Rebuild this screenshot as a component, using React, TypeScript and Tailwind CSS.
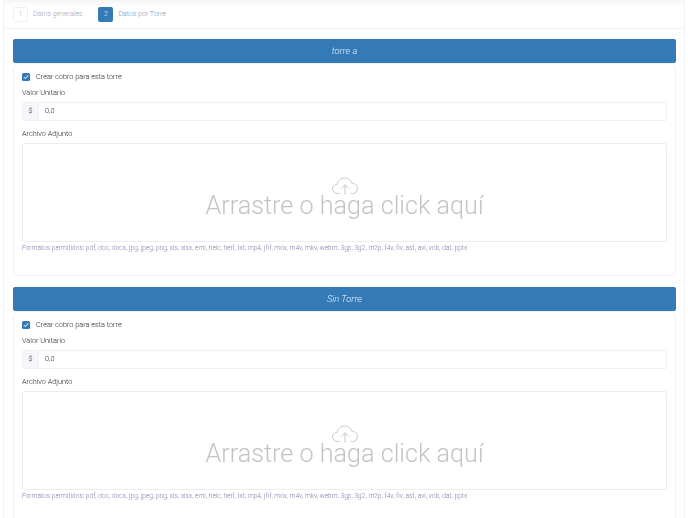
const Cloud = () => (
  <svg width="27" height="18" viewBox="0 0 27 18" fill="none" stroke="#c9c9c9" strokeWidth="1" className="absolute left-1/2 top-[33px] -translate-x-1/2">
    <path d="M8 16.5H6.5C3.2 16.5 1 14.4 1 11.7C1 9.2 3 7.3 5.6 7.2C6.4 3.6 9.5 1 13.2 1C16.8 1 19.6 3.2 20.6 6.4C23.6 6.5 26 8.6 26 11.5C26 14.4 23.8 16.5 20.8 16.5H19" />
    <path d="M13.5 17.5V8M9.8 11.5L13.5 7.8L17.2 11.5" />
  </svg>
);

const Section = ({ title }: { title: string }) => (
  <section className="mb-[11px]">
    <div className="h-[24px] flex items-center justify-center rounded-[2px] bg-[#337ab7] text-[9.3px] italic font-light text-[#e8f0f8]">{title}</div>
    <div className="h-[213px] rounded-[6px] border border-[#f1f1f8] px-2 pt-[7px]">
      <label className="flex items-center h-[12px] text-[7.3px] font-light text-[#222]">
        <span className="mr-[6px] w-[8px] h-[8px] rounded-[1.5px] bg-[#337ab7] flex items-center justify-center">
          <svg width="6" height="6" viewBox="0 0 6 6" fill="none" stroke="white" strokeWidth="1"><path d="M0.8 3L2.4 4.6L5.2 1.2" /></svg>
        </span>
        Crear cobro para esta torre
      </label>
      <div className="mt-[4px] h-[12px] leading-[12px] text-[7.3px] font-light text-[#222]">Valor Unitario</div>
      <div className="mt-[3px] flex h-[19px] rounded-[2px] border border-[#f0f0f6] text-[7.3px] font-light text-[#333]">
        <span className="w-[16px] flex items-center justify-center bg-[#f6f6fb] border-r border-[#f0f0f6]">$</span>
        <span className="pl-[6px] flex items-center">0,0</span>
      </div>
      <div className="mt-[7px] h-[12px] leading-[12px] text-[7.3px] font-light text-[#222]">Archivo Adjunto</div>
      <div className="relative mt-[3px] h-[99px] rounded-[2px] border border-[#ececf2] flex items-center justify-center pt-[27px] text-[25.2px] font-light text-[#c4c4c4]">
        <Cloud />
        Arrastre o haga click aquí
      </div>
      <div className="mt-[1px] text-[6.5px] leading-[10px] font-light tracking-[0.055px] text-[#7a7aa8]">Formatos permitidos: pdf, doc, docx, jpg, jpeg, png, xls, xlsx, eml, heic, heif, txt, mp4, jfif, mov, m4v, mkv, webm, 3gp, 3g2, m2p, f4v, flv, asf, avi, vob, dat, pptx</div>
    </div>
  </section>
);

export default function App() {
  return (
    <div className="h-[518px] overflow-hidden bg-white font-['Roboto',sans-serif] mx-[3px] border-x border-[#f2f2f8]">
      <header className="h-[29px] border-b border-[#f0f0f8] bg-gradient-to-b from-[#f5f5f5] to-white to-[7px] flex items-center pl-[9px] text-[7px] font-light">
        <span className="w-[15px] h-[15px] flex items-center justify-center border border-[#eef0f6] rounded-[2px] text-[#9fb4cc]">1</span>
        <span className="ml-[5px] text-[#9aa6b8]">Datos generales</span>
        <span className="ml-[16px] w-[15px] h-[15px] flex items-center justify-center rounded-[2px] bg-[#337ab7] text-[#e8f0f8]">2</span>
        <span className="ml-[5px] text-[#6f97c2]">Datos por Torre</span>
      </header>
      <main className="pt-[10px] pl-[9px] pr-[8px] will-change-transform">
        <Section title="torre a" />
        <Section title="Sin Torre" />
      </main>
    </div>
  );
}
